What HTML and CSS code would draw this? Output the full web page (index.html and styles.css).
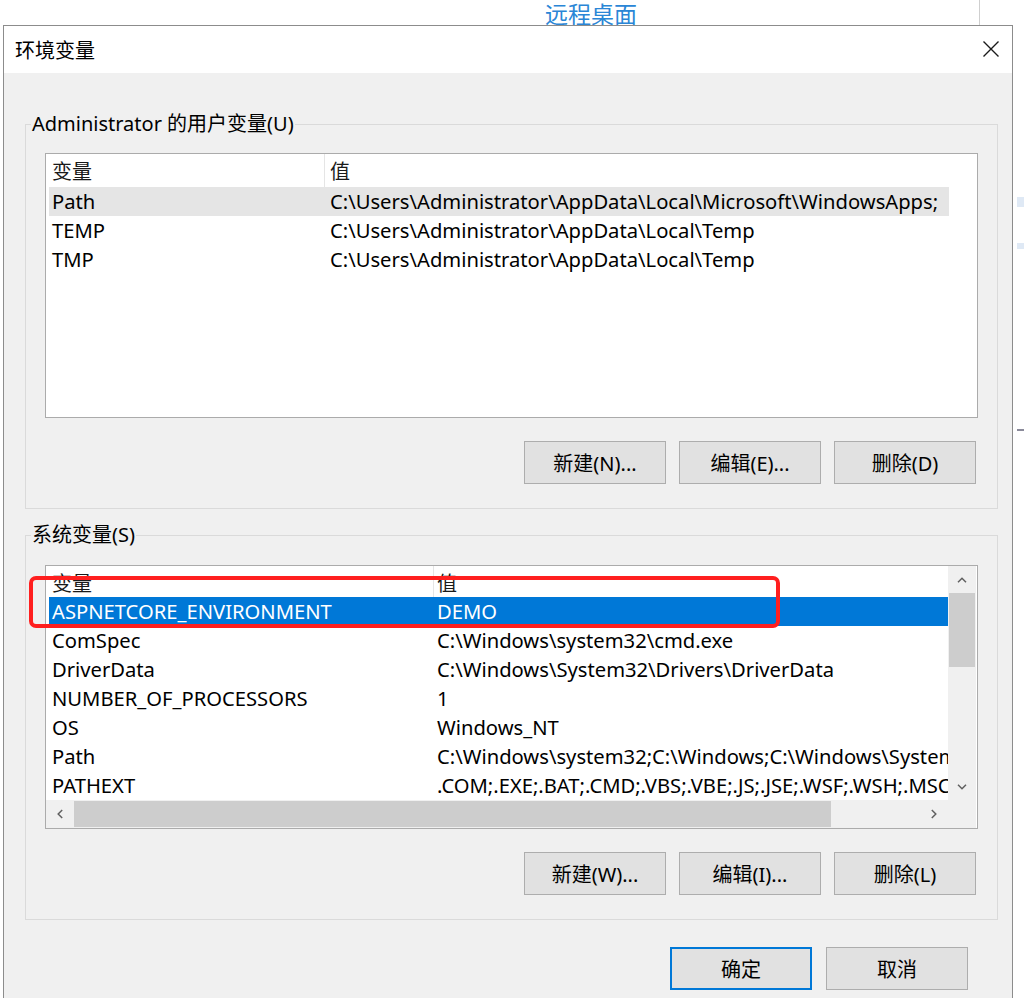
FILE: index.html
```html
<!DOCTYPE html>
<html lang="zh-CN">
<head>
<meta charset="utf-8">
<title>环境变量</title>
<link rel="stylesheet" href="styles.css">
</head>
<body>
<div class="desktop">
  <div class="bg-window">
    <span class="bg-title">远程桌面</span>
  </div>
  <div class="bg-right">
    <div class="bg-band b1"></div>
    <div class="bg-band b2"></div>
    <div class="bg-line"></div>
  </div>

  <div class="dialog">
    <div class="titlebar">
      <span class="title">环境变量</span>
      <span class="close" aria-label="关闭">
        <svg width="16" height="16" viewBox="0 0 16 16"><path d="M0.5 0.5 L15.5 15.5 M15.5 0.5 L0.5 15.5" stroke="#1a1a1a" stroke-width="1.4" fill="none"/></svg>
      </span>
    </div>

    <div class="body">
      <fieldset class="group group-user">
        <legend>Administrator 的用户变量(U)</legend>
        <div class="list list-user">
          <div class="list-head">
            <div class="hcell">变量</div>
            <div class="hcell">值</div>
          </div>
          <div class="row sel-inactive"><span class="cell">Path</span><span class="cell">C:\Users\Administrator\AppData\Local\Microsoft\WindowsApps;</span></div>
          <div class="row"><span class="cell">TEMP</span><span class="cell">C:\Users\Administrator\AppData\Local\Temp</span></div>
          <div class="row"><span class="cell">TMP</span><span class="cell">C:\Users\Administrator\AppData\Local\Temp</span></div>
        </div>
        <div class="btn-row">
          <button class="btn">新建(N)...</button>
          <button class="btn">编辑(E)...</button>
          <button class="btn">删除(D)</button>
        </div>
      </fieldset>

      <fieldset class="group group-sys">
        <legend>系统变量(S)</legend>
        <div class="list list-sys">
          <div class="viewport">
            <div class="list-head">
              <div class="hcell">变量</div>
              <div class="hcell">值</div>
            </div>
            <div class="row sel-active"><span class="cell">ASPNETCORE_ENVIRONMENT</span><span class="cell">DEMO</span></div>
            <div class="row"><span class="cell">ComSpec</span><span class="cell">C:\Windows\system32\cmd.exe</span></div>
            <div class="row"><span class="cell">DriverData</span><span class="cell">C:\Windows\System32\Drivers\DriverData</span></div>
            <div class="row"><span class="cell">NUMBER_OF_PROCESSORS</span><span class="cell">1</span></div>
            <div class="row"><span class="cell">OS</span><span class="cell">Windows_NT</span></div>
            <div class="row"><span class="cell">Path</span><span class="cell">C:\Windows\system32;C:\Windows;C:\Windows\System32\Wbem</span></div>
            <div class="row"><span class="cell">PATHEXT</span><span class="cell">.COM;.EXE;.BAT;.CMD;.VBS;.VBE;.JS;.JSE;.WSF;.WSH;.MSC</span></div>
          </div>
          <div class="vscroll">
            <span class="arrow"><svg width="10" height="6" viewBox="0 0 10 6"><polyline points="1,5.2 5,1.2 9,5.2" fill="none" stroke="#606060" stroke-width="1.5"/></svg></span>
            <span class="vthumb"></span>
            <span class="vtrack"></span>
            <span class="arrow"><svg width="10" height="6" viewBox="0 0 10 6"><polyline points="1,0.8 5,4.8 9,0.8" fill="none" stroke="#606060" stroke-width="1.5"/></svg></span>
          </div>
          <div class="hscroll">
            <span class="arrow"><svg width="6" height="10" viewBox="0 0 6 10"><polyline points="5.2,1 1.2,5 5.2,9" fill="none" stroke="#606060" stroke-width="1.5"/></svg></span>
            <span class="hthumb"></span>
            <span class="htrack"></span>
            <span class="arrow"><svg width="6" height="10" viewBox="0 0 6 10"><polyline points="0.8,1 4.8,5 0.8,9" fill="none" stroke="#606060" stroke-width="1.5"/></svg></span>
          </div>
          <div class="corner"></div>
        </div>
        <div class="btn-row">
          <button class="btn">新建(W)...</button>
          <button class="btn">编辑(I)...</button>
          <button class="btn">删除(L)</button>
        </div>
      </fieldset>

      <div class="actions">
        <button class="btn btn-default">确定</button>
        <button class="btn">取消</button>
      </div>
    </div>

    <div class="annotation"></div>
  </div>
</div>
</body>
</html>
```

FILE: styles.css
```css
* { box-sizing: border-box; }

html, body {
  margin: 0;
  padding: 0;
}

body {
  width: 1024px;
  height: 998px;
  overflow: hidden;
  background: #ffffff;
  font-family: "Segoe UI", "Noto Sans", "Noto Sans CJK SC", sans-serif;
  font-size: 20px;
  color: #000;
}

.desktop {
  position: relative;
  width: 1024px;
  height: 998px;
  overflow: hidden;
  background: #ffffff;
}

/* window behind the dialog */
.bg-window {
  width: 980px;
  height: 25px;
  border-right: 1px solid #cfcfcf;
  padding-left: 545px;
  padding-top: 2px;
}

.bg-title {
  display: block;
  font-family: "Noto Sans CJK SC", sans-serif;
  font-size: 23px;
  line-height: 23px;
  color: #2a86d6;
}

.bg-right {
  position: absolute;
  left: 1013px;
  top: 25px;
  width: 11px;
  height: 973px;
  background: #fff;
}

.bg-band {
  height: 10px;
  background: #dfe9f5;
  margin-left: 4px;
}

.b1 { margin-top: 172px; }
.b2 { margin-top: 36px; height: 6px; }

.bg-line {
  margin-top: 180px;
  margin-left: 4px;
  height: 2px;
  background: #8a8a9a;
}

/* dialog window */
.dialog {
  position: absolute;
  left: 3px;
  top: 25px;
  width: 1010px;
  height: 1000px;
  border: 1px solid #8c8c8c;
  background: #f0f0f0;
}

.titlebar {
  height: 47px;
  background: #fff;
  display: flex;
  align-items: center;
  padding-left: 11px;
  padding-right: 13px;
}

.title {
  font-family: "Noto Sans CJK SC", sans-serif;
  font-size: 20px;
  line-height: 26px;
  color: #000;
}

.close {
  margin-left: auto;
  display: flex;
  width: 16px;
  height: 16px;
  margin-top: -1px;
}

.body {
  padding: 38px 14px 0 21px;
}

.group {
  margin: 0;
  min-width: 0;
  border: 1px solid #dadada;
  padding: 16px 19px 24px 19px;
}

.group legend {
  margin-left: -14px;
  padding: 0 1px;
  line-height: 26px;
  font-size: 20px;
  color: #000;
}

.group-sys {
  margin-top: 13px;
  padding-top: 17px;
}

/* list views */
.list {
  background: #fff;
  border: 1px solid #ababab;
  overflow: hidden;
}

.list-user {
  height: 265px;
}

.list-head {
  display: grid;
  height: 33px;
  line-height: 27px;
  padding-top: 4px;
  color: #1a1a1a;
}

.list-user .list-head {
  grid-template-columns: 279px 1fr;
}

.list-user .list-head .hcell:first-child {
  padding-left: 6px;
  border-right: 1px solid #e5e5e5;
  margin-top: -4px;
  padding-top: 4px;
}

.list-user .list-head .hcell:last-child {
  padding-left: 5px;
}

.row {
  display: grid;
  width: 900px;
  height: 29px;
  line-height: 29px;
  margin-left: 3px;
  white-space: nowrap;
  font-size: 20.2px;
}

.cell {
  padding-left: 3px;
  overflow: hidden;
}

.list-user .row {
  grid-template-columns: 278px 1fr;
}

.sel-inactive {
  background: #e5e5e5;
}

.sel-active {
  background: #0078d7;
  color: #fff;
}

.list-sys {
  height: 264px;
  display: grid;
  grid-template-columns: 902px 28px;
  grid-template-rows: 234px 28px;
}

.viewport {
  overflow: hidden;
}

.list-sys .list-head {
  height: 31px;
  grid-template-columns: 388px 1fr;
}

.list-sys .list-head .hcell:first-child {
  padding-left: 6px;
  border-right: 1px solid #e5e5e5;
  margin-top: -4px;
  padding-top: 4px;
}

.list-sys .list-head .hcell:last-child {
  padding-left: 3px;
}

.list-sys .row {
  grid-template-columns: 385px 1fr;
}

/* scrollbars */
.vscroll {
  background: #f0f0f0;
  display: flex;
  flex-direction: column;
}

.vscroll .arrow {
  height: 27px;
  display: flex;
  align-items: center;
  justify-content: center;
  flex: none;
}

.vthumb {
  height: 74px;
  margin: 0 1px;
  background: #cdcdcd;
  flex: none;
}

.vtrack { flex: 1; }

.hscroll {
  background: #f0f0f0;
  display: flex;
}

.hscroll .arrow {
  width: 28px;
  display: flex;
  align-items: center;
  justify-content: center;
  flex: none;
}

.hthumb {
  width: 757px;
  margin: 1px 0;
  background: #cdcdcd;
  flex: none;
}

.htrack { flex: 1; }

.corner {
  background: #f0f0f0;
}

/* buttons */
.btn-row {
  display: flex;
  justify-content: flex-end;
  gap: 13px;
  margin-top: 23px;
  padding-right: 2px;
}

.btn {
  width: 142px;
  height: 43px;
  margin: 0;
  padding: 0;
  background: #e1e1e1;
  border: 1px solid #adadad;
  font-family: "Segoe UI", "Noto Sans", "Noto Sans CJK SC", sans-serif;
  font-size: 20px;
  color: #000;
}

.btn-default {
  border-color: #0078d7;
  box-shadow: inset 0 0 0 1px #0078d7;
}

.actions {
  display: flex;
  justify-content: flex-end;
  gap: 14px;
  margin-top: 27px;
  padding-right: 30px;
}

/* red annotation drawn over the screenshot */
.annotation {
  position: absolute;
  left: 25px;
  top: 550px;
  width: 751px;
  height: 52px;
  border: 4px solid #ff1f1f;
  border-radius: 7px;
}
```
